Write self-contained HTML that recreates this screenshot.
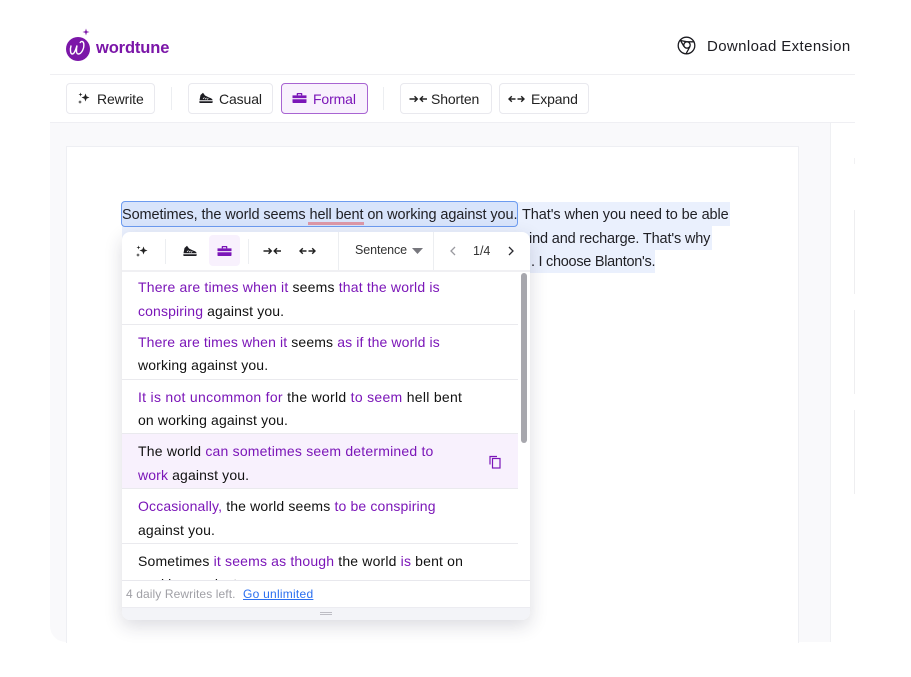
<!DOCTYPE html>
<html>
<head>
<meta charset="utf-8">
<style>
html,body{margin:0;padding:0;background:#fff;}
body{width:911px;height:677px;position:relative;overflow:hidden;font-family:"Liberation Sans",sans-serif;color:#1a1a1f;}
.a{position:absolute;}
.t{position:absolute;white-space:nowrap;}
.btn{position:absolute;top:83px;height:29px;border:1px solid #e9e9ee;border-radius:4px;background:#fff;box-sizing:content-box;}
.btn span{position:absolute;top:7px;font-size:14px;line-height:17px;white-space:nowrap;letter-spacing:-.12px;color:#222;}
.doc{font-size:14.5px;line-height:24px;color:#1f1f24;}
.s{position:absolute;left:138px;font-size:14px;line-height:24px;white-space:nowrap;color:#111;letter-spacing:.13px;}
.s b{font-weight:normal;color:#7b16b8;}
.h{position:absolute;left:122px;width:396px;height:1px;background:#eaeaee;}
.v{position:absolute;width:1px;background:#eceef1;}
svg{position:absolute;overflow:visible;}
</style>
</head>
<body>

<!-- header -->
<svg style="left:62px;top:27px" width="34" height="36" viewBox="0 0 34 36">
  <circle cx="16" cy="22" r="12" fill="#7b16a8"/>
  <path d="M9 19c-1 3-.8 8 1.300 8 2.200 0 3.700-5 4.700-8.500-.8 4-1 8.500 1.300 8.500 3.200 0 6-5.500 5.500-10-.2-2.500-2.300-3.500-3.600-1.500" fill="none" stroke="#fff" stroke-width="1.400" stroke-linecap="round"/>
  <path d="M24 1.500l.8 2.700 2.700.8-2.700.8-.8 2.700-.8-2.700-2.700-.8 2.700-.8z" fill="#7b16a8"/>
</svg>
<div class="t" style="left:96px;top:38px;font-size:16.500px;line-height:20px;font-weight:bold;color:#7b16a8;letter-spacing:-.12px">wordtune</div>

<svg style="left:677px;top:36px" width="20" height="20" viewBox="0 0 20 20" fill="none" stroke="#1b1b20" stroke-width="1.300">
  <circle cx="9.500" cy="9.500" r="8.300"/>
  <circle cx="10" cy="9" r="3.200"/>
  <path d="M3.500 4.500L10 5.800H17.500M13 10.500L9 17.800M7 10.500L3.500 4.500"/>
</svg>
<div class="t" style="left:707px;top:38px;font-size:15px;line-height:18px;letter-spacing:.38px;color:#1d1d22">Download Extension</div>

<div class="a" style="left:50px;top:74px;width:805px;height:1px;background:#efeff2"></div>

<!-- toolbar -->
<div class="btn" style="left:66px;width:87px"><span style="left:30px">Rewrite</span>
  <svg style="left:10px;top:7px" width="14" height="14" viewBox="0 0 14 14" fill="#222"><path d="M8.500 2.500l1.100 2.900 2.900 1.100-2.900 1.100-1.100 2.900-1.100-2.900-2.900-1.100 2.900-1.100z"/><path d="M3.500 1.500l.5 1.500 1.500.5-1.500.5-.5 1.500-.5-1.500-1.500-.5 1.500-.5zM3 9l.5 1.500 1.500.5-1.500.5-.5 1.500-.5-1.500-1.500-.5 1.500-.5z"/></svg>
</div>
<div class="v" style="left:171px;top:87px;height:23px"></div>
<div class="btn" style="left:188px;width:83px"><span style="left:30px">Casual</span>
  <svg style="left:9px;top:8px" width="16" height="12" viewBox="0 0 16 12"><path d="M1.500 8.300L2.500 3 5 .8l2 2.700 4 2c2 .6 3.500 1.500 3.700 2.800z" fill="#1d1d22"/><path d="M1.300 9.200h13.400c.2.900-.1 1.800-1 1.800H2.200c-.7 0-1-.5-.9-1.800z" fill="#1d1d22"/><path d="M5 6.800l1.500-1.300M7 7.200l1.500-1.300M9 7.500l1.300-1.200" stroke="#fff" stroke-width=".8" fill="none"/></svg>
</div>
<div class="btn" style="left:281px;width:85px;background:#f8f1fd;border-color:#a864d2"><span style="left:31px;color:#7b16b8">Formal</span>
  <svg style="left:10px;top:9px" width="15" height="10" viewBox="0 0 15 10" fill="#7b16b8"><path d="M4.700 2.400V.7c0-.4.300-.7.700-.7h4.200c.4 0 .7.300.7.700v1.700H9V1.200H6v1.200z"/><path d="M.5 2.400h14v2.700H.5zM.5 6.200h14v3c0 .4-.3.800-.8.800H1.300c-.5 0-.8-.4-.8-.8z"/></svg>
</div>
<div class="v" style="left:383px;top:87px;height:23px"></div>
<div class="btn" style="left:400px;width:90px"><span style="left:30px">Shorten</span>
  <svg style="left:8px;top:9px" width="19" height="12" viewBox="0 0 19 12" fill="none" stroke="#222" stroke-width="1.400"><path d="M.5 6H8M5.500 3.200L8.300 6 5.500 8.800M18 6h-6.800M14 3.200L11.200 6 14 8.800"/></svg>
</div>
<div class="btn" style="left:499px;width:88px"><span style="left:31px">Expand</span>
  <svg style="left:8px;top:9px" width="17" height="12" viewBox="0 0 17 12" fill="none" stroke="#222" stroke-width="1.400"><path d="M7.500 6H1M3.800 3.200L1 6l2.800 2.800M9.500 6H16M13.200 3.200L16 6l-2.800 2.800"/></svg>
</div>

<div class="a" style="left:50px;top:122px;width:805px;height:1px;background:#efeff3"></div>

<!-- workspace -->
<div class="a" style="left:50px;top:123px;width:780px;height:519px;background:#f9f9fb;border-right:1px solid #eff0f3;border-bottom-left-radius:16px"></div>
<div class="a" style="left:66px;top:146px;width:731px;height:496px;background:#fff;border:1px solid #eeeff3;border-bottom:0"></div>

<div class="a" style="left:854px;top:158px;width:1px;height:6px;background:#f1f1f3"></div>
<div class="a" style="left:854px;top:210px;width:1px;height:84px;background:#eeeef0"></div>
<div class="a" style="left:854px;top:310px;width:1px;height:84px;background:#eeeef0"></div>
<div class="a" style="left:854px;top:410px;width:1px;height:84px;background:#eeeef0"></div>

<!-- document highlight -->
<div class="a" style="left:122px;top:202px;width:608px;height:24px;background:#eaf0fd"></div>
<div class="a" style="left:122px;top:226px;width:590px;height:24px;background:#eaf0fd"></div>
<div class="a" style="left:122px;top:250px;width:533px;height:23px;background:#eaf0fd"></div>
<div class="a" style="left:121px;top:201px;width:395px;height:24px;background:#d8e4fb;border:1px solid #6c9bf0;border-radius:4px"></div>
<div class="a" style="left:308px;top:222px;width:56px;height:3px;background:#dc97a8"></div>

<div class="t doc" style="left:122px;top:203px;letter-spacing:-.1px">Sometimes, the world seems hell bent on working against you.</div>
<div class="t doc" style="left:522px;top:203px;letter-spacing:-.08px">That's when you need to be able</div>
<div class="t doc" style="left:529px;top:227px;letter-spacing:-.15px">ind and recharge. That's why</div>
<div class="t doc" style="left:531px;top:250px;letter-spacing:-.28px">. I choose Blanton's.</div>

<!-- popup -->
<div class="a" style="left:122px;top:232px;width:408px;height:388px;background:#fff;border-radius:8px;box-shadow:0 6px 18px rgba(30,30,60,.16);overflow:hidden">
  <div class="a" style="left:0;top:38px;width:408px;height:2px;background:#f0f0f3"></div>
  <div class="a" style="left:87px;top:3px;width:31px;height:31px;background:#f8f1fd;border-radius:4px"></div>
  <div class="s" style="left:16px;top:340px;letter-spacing:.13px">working against you.</div>
  <div class="a" style="left:0;top:348px;width:408px;height:28px;background:#fff;border-top:1px solid #e8e8ed;box-sizing:border-box"></div>
  <div class="a" style="left:0;top:375px;width:408px;height:13px;background:#f3f4f8;border-top:1px solid #ececf1;box-sizing:border-box"></div>
  <div class="a" style="left:198px;top:380px;width:12px;height:1px;background:#bdbdc4"></div>
  <div class="a" style="left:198px;top:382px;width:12px;height:1px;background:#bdbdc4"></div>
</div>

<div class="v" style="left:165px;top:239px;height:25px"></div>
<div class="v" style="left:248px;top:239px;height:25px"></div>
<div class="v" style="left:338px;top:232px;height:38px"></div>
<div class="v" style="left:433px;top:232px;height:38px"></div>

<svg style="left:135px;top:244px" width="14" height="14" viewBox="0 0 14 14" fill="#222"><path d="M8.500 2.500l1.100 2.900 2.900 1.100-2.900 1.100-1.100 2.900-1.100-2.900-2.900-1.100 2.900-1.100z"/><path d="M3.500 1.500l.5 1.500 1.500.5-1.500.5-.5 1.500-.5-1.500-1.500-.5 1.500-.5zM3 9l.5 1.500 1.500.5-1.500.5-.5 1.500-.5-1.500-1.500-.5 1.500-.5z"/></svg>
<svg style="left:182px;top:245px" width="16" height="12" viewBox="0 0 16 12"><path d="M1.500 8.300L2.500 3 5 .8l2 2.700 4 2c2 .6 3.500 1.500 3.700 2.800z" fill="#1d1d22"/><path d="M1.300 9.200h13.400c.2.900-.1 1.800-1 1.800H2.200c-.7 0-1-.5-.9-1.800z" fill="#1d1d22"/><path d="M5 6.800l1.500-1.300M7 7.200l1.500-1.300M9 7.500l1.300-1.200" stroke="#fff" stroke-width=".8" fill="none"/></svg>
<svg style="left:217px;top:246px" width="15" height="10" viewBox="0 0 15 10" fill="#7b16b8"><path d="M4.700 2.400V.7c0-.4.300-.7.700-.7h4.200c.4 0 .7.300.7.700v1.700H9V1.200H6v1.200z"/><path d="M.5 2.400h14v2.700H.5zM.5 6.200h14v3c0 .4-.3.800-.8.800H1.300c-.5 0-.8-.4-.8-.8z"/></svg>
<svg style="left:263px;top:245px" width="19" height="12" viewBox="0 0 19 12" fill="none" stroke="#222" stroke-width="1.400"><path d="M.5 6H8M5.500 3.200L8.300 6 5.500 8.800M18 6h-6.800M14 3.200L11.200 6 14 8.800"/></svg>
<svg style="left:299px;top:245px" width="17" height="12" viewBox="0 0 17 12" fill="none" stroke="#222" stroke-width="1.400"><path d="M7.500 6H1M3.800 3.200L1 6l2.800 2.800M9.500 6H16M13.200 3.200L16 6l-2.800 2.800"/></svg>

<div class="t" style="left:355px;top:242px;font-size:12.500px;line-height:16px;color:#333;letter-spacing:-.1px">Sentence</div>
<svg style="left:412px;top:248px" width="11" height="6" viewBox="0 0 11 6"><path d="M0 0h11L5.500 6z" fill="#77777d"/></svg>
<svg style="left:449px;top:246px" width="8" height="10" viewBox="0 0 8 10" fill="none" stroke="#9a9aa0" stroke-width="1.300"><path d="M6 1L2 5l4 4"/></svg>
<div class="t" style="left:473px;top:243px;font-size:12.500px;line-height:16px;color:#333">1/4</div>
<svg style="left:507px;top:246px" width="8" height="10" viewBox="0 0 8 10" fill="none" stroke="#2a2a30" stroke-width="1.300"><path d="M2 1l4 4-4 4"/></svg>

<!-- suggestions -->
<div class="a" style="left:122px;top:434px;width:396px;height:54px;background:#f8f1fd"></div>
<div class="s" style="top:275px;letter-spacing:.18px"><b>There are times when it</b> seems <b>that the world is</b></div>
<div class="s" style="top:299px"><b>conspiring</b> against you.</div>
<div class="h" style="top:324px"></div>
<div class="s" style="top:330px"><b>There are times when it</b> seems <b>as if the world is</b></div>
<div class="s" style="top:353px">working against you.</div>
<div class="h" style="top:379px"></div>
<div class="s" style="top:385px;letter-spacing:.29px"><b>It is not uncommon for</b> the world <b>to seem</b> hell bent</div>
<div class="s" style="top:408px">on working against you.</div>
<div class="h" style="top:433px"></div>
<div class="s" style="top:439px;letter-spacing:.2px">The world <b>can sometimes seem determined to</b></div>
<div class="s" style="top:463px"><b>work</b> against you.</div>
<svg style="left:489px;top:455px" width="13" height="14" viewBox="0 0 13 14" fill="none" stroke="#7b16b8" stroke-width="1.200"><path d="M1 9.500V1.500h7"/><rect x="3.500" y="3.500" width="7.500" height="9.500"/></svg>
<div class="h" style="top:488px"></div>
<div class="s" style="top:494px;letter-spacing:.15px"><b>Occasionally,</b> the world seems <b>to be conspiring</b></div>
<div class="s" style="top:518px">against you.</div>
<div class="h" style="top:543px"></div>
<div class="s" style="top:549px;letter-spacing:.17px">Sometimes <b>it seems as though</b> the world <b>is</b> bent on</div>

<div class="a" style="left:521px;top:273px;width:6px;height:170px;background:#a7a7ad;border-radius:3px"></div>

<div class="t" style="left:126px;top:587px;font-size:12px;line-height:15px;color:#a0a0a6;letter-spacing:.1px">4 daily Rewrites left.</div>
<div class="t" style="left:243px;top:587px;font-size:12px;line-height:15px;color:#2a6ff0;text-decoration:underline;letter-spacing:.25px">Go unlimited</div>

</body>
</html>
